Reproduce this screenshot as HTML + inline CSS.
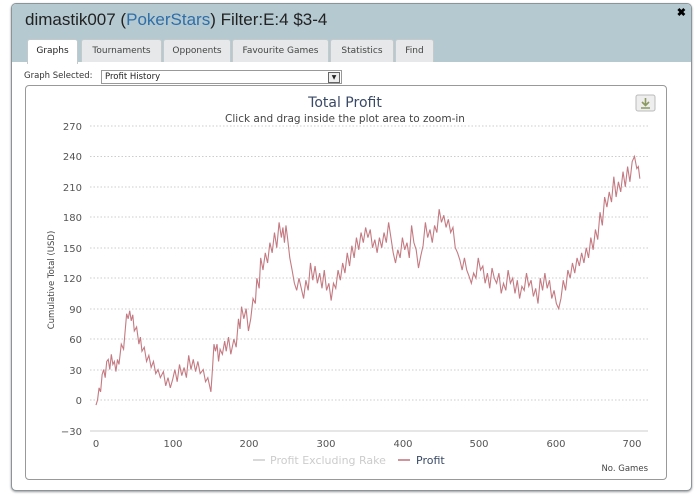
<!DOCTYPE html>
<html><head><meta charset="utf-8"><style>
body{margin:0;width:700px;height:504px;background:#fff;font-family:"DejaVu Sans","Liberation Sans",sans-serif;position:relative;overflow:hidden}
.dlg{position:absolute;left:11px;top:3px;width:679px;height:486px;border:1px solid #8a9499;border-radius:5px;background:#fff;overflow:hidden;box-shadow:0 1px 2px #999}
.hdr{position:absolute;left:0;top:0;right:0;height:58px;background:#b5c9d1}
.title{position:absolute;left:13px;top:6px;font:17px "Liberation Sans",sans-serif;color:#222}
.title span{color:#2f6ea8}
.x{position:absolute;right:5px;top:2px;font:bold 11px "Liberation Sans",sans-serif}
.tab{position:absolute;top:35px;height:22px;background:#e6e8e9;border:1px solid #c4cacc;border-bottom:none;font-size:9px;color:#444;line-height:22px;text-align:center;border-radius:3px 3px 0 0}
.tab.a{background:#fff;height:24px;color:#222}
.sel{position:absolute;left:12px;top:67px;font-size:8.5px;color:#333}
.box{position:absolute;left:89px;top:66px;width:236px;height:12px;border:1px solid #999;font-size:8.5px;line-height:12px;padding-left:3px;color:#222}
.dd{position:absolute;right:1px;top:1px;width:10px;height:9px;border:1px solid #666;background:#eee;font-size:6px;text-align:center;line-height:9px}
.chart{position:absolute;left:13px;top:81px;width:640px;height:393px;border:1px solid #999;border-radius:4px}
</style></head><body>
<div class="dlg">
<div class="hdr"></div>
<div class="title">dimastik007 (<span>PokerStars</span>) Filter:E:4 $3-4</div>
<div class="x">✖</div>
<div class="tab a" style="left:15px;width:49px">Graphs</div>
<div class="tab" style="left:69px;width:79px">Tournaments</div>
<div class="tab" style="left:151px;width:66px">Opponents</div>
<div class="tab" style="left:220px;width:95px">Favourite Games</div>
<div class="tab" style="left:318px;width:62px">Statistics</div>
<div class="tab" style="left:383px;width:37px">Find</div>
<div class="sel">Graph Selected:</div>
<div class="box">Profit History<div class="dd">▼</div></div>
<div class="chart"></div>
</div>
<svg style="position:absolute;left:0;top:0" width="700" height="504">
<text x="345" y="107" font-family="DejaVu Sans,sans-serif" font-size="14" fill="#3a4a66" text-anchor="middle">Total Profit</text>
<text x="345" y="122" font-family="DejaVu Sans,sans-serif" font-size="10.5" fill="#444" text-anchor="middle">Click and drag inside the plot area to zoom-in</text>
<rect x="636" y="95" width="19" height="16" rx="2" fill="#eee" stroke="#bbb"/>
<path d="M645.5 98v7M642 102l3.5 3.5 3.5-3.5M641 108h9" stroke="#8a9a60" stroke-width="1.6" fill="none"/>
<g stroke="#ccc" stroke-dasharray="1.5,2" stroke-width="1">
<line x1="90" y1="126" x2="648" y2="126"/><line x1="90" y1="156.5" x2="648" y2="156.5"/><line x1="90" y1="187" x2="648" y2="187"/><line x1="90" y1="217" x2="648" y2="217"/><line x1="90" y1="248" x2="648" y2="248"/><line x1="90" y1="278" x2="648" y2="278"/><line x1="90" y1="309" x2="648" y2="309"/><line x1="90" y1="339" x2="648" y2="339"/><line x1="90" y1="370" x2="648" y2="370"/><line x1="90" y1="400" x2="648" y2="400"/>
</g>
<line x1="90" y1="431" x2="648" y2="431" stroke="#ccc"/>
<g font-family="DejaVu Sans,sans-serif" font-size="10" fill="#555" text-anchor="end">
<text x="82" y="130">270</text><text x="82" y="160">240</text><text x="82" y="191">210</text><text x="82" y="221">180</text><text x="82" y="252">150</text><text x="82" y="282">120</text><text x="82" y="313">90</text><text x="82" y="343">60</text><text x="82" y="374">30</text><text x="82" y="404">0</text><text x="82" y="435">−30</text>
</g>
<g font-family="DejaVu Sans,sans-serif" font-size="10" fill="#555" text-anchor="middle">
<text x="96" y="447">0</text><text x="173" y="447">100</text><text x="249" y="447">200</text><text x="326" y="447">300</text><text x="403" y="447">400</text><text x="479" y="447">500</text><text x="556" y="447">600</text><text x="632" y="447">700</text>
</g>
<text transform="translate(54,280) rotate(-90)" font-family="DejaVu Sans,sans-serif" font-size="8.5" fill="#444" text-anchor="middle">Cumulative Total (USD)</text>
<text x="648" y="471" font-family="DejaVu Sans,sans-serif" font-size="8.5" fill="#444" text-anchor="end">No. Games</text>
<line x1="253" y1="460" x2="265" y2="460" stroke="#ccc" stroke-width="1.5"/>
<text x="270" y="464" font-family="DejaVu Sans,sans-serif" font-size="11" fill="#ccc">Profit Excluding Rake</text>
<line x1="398" y1="460" x2="410" y2="460" stroke="#c0707a" stroke-width="1.5"/>
<text x="416" y="464" font-family="DejaVu Sans,sans-serif" font-size="11" fill="#3a4a66">Profit</text>
<g transform="translate(96,400) scale(0.766,-1.015)">
<path vector-effect="non-scaling-stroke" stroke="#c47a82" stroke-width="1.1" fill="none" d="M0,-5 L2,0 4,12 6,8 8,25 10,30 12,22 14,38 16,40 18,30 20,45 22,35 24,38 26,28 28,40 30,35 33,55 36,50 40,85 42,80 44,88 46,78 48,84 50,68 53,72 56,55 58,62 60,48 63,52 66,38 69,44 72,32 75,38 78,26 81,30 84,22 88,28 91,14 94,22 97,12 100,20 103,30 106,18 109,35 112,24 115,32 118,22 121,44 124,30 127,40 130,28 133,38 136,26 140,30 143,18 146,22 150,8 152,30 154,55 156,48 158,55 160,38 162,50 165,45 168,58 170,48 173,62 176,45 180,60 183,52 186,80 188,70 190,92 193,80 196,90 199,68 202,80 205,100 208,95 210,120 213,110 215,140 218,128 221,145 224,135 227,155 230,145 233,165 236,150 239,175 242,160 244,170 246,155 248,172 250,160 253,140 256,128 259,115 262,108 265,120 268,110 271,100 274,118 277,108 280,135 283,118 286,132 289,115 292,125 295,110 298,128 301,108 304,115 307,98 310,115 313,110 316,128 319,118 322,135 325,125 328,145 331,132 334,152 337,140 340,160 343,148 346,165 349,155 352,170 355,160 358,168 361,150 364,158 367,145 370,160 373,150 376,165 379,155 382,175 385,160 388,145 391,135 394,148 397,140 400,160 403,148 406,155 409,140 412,172 415,155 418,148 421,130 424,142 427,152 430,175 433,160 436,168 439,155 442,172 445,165 448,188 451,175 454,182 457,170 460,178 463,165 466,170 469,150 472,145 475,138 478,128 481,140 484,128 487,122 490,115 493,125 496,120 499,140 502,128 505,132 508,115 511,125 514,110 517,130 520,120 523,115 526,125 529,105 532,115 535,108 538,128 541,115 544,120 547,105 550,118 553,100 556,112 559,108 562,125 565,112 568,118 571,102 574,110 577,95 580,120 583,108 586,125 589,110 592,118 595,100 598,108 601,95 604,90 607,100 610,118 613,108 616,128 619,120 622,135 625,125 628,140 631,132 634,145 637,135 640,150 643,140 646,160 649,148 652,168 655,158 658,185 661,172 664,200 667,190 670,205 673,195 676,220 679,200 682,215 685,205 688,225 691,210 694,230 697,215 700,235 703,240 706,228 708,230 710,218"/>
</g>
</svg>
</body></html>
